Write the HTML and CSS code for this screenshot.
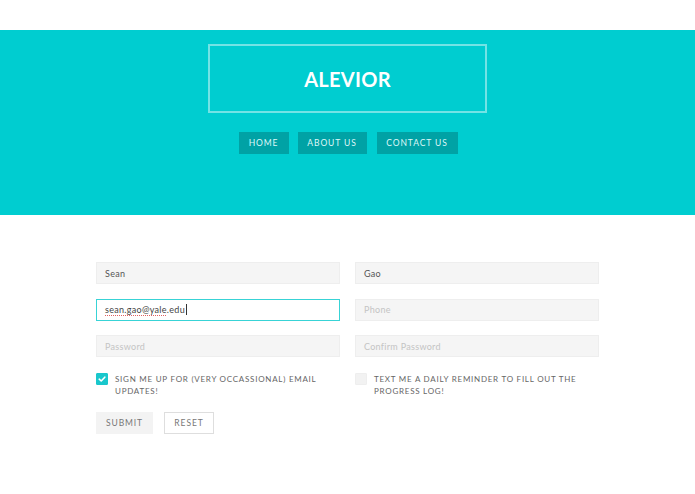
FILE: index.html
```html
<!DOCTYPE html>
<html>
<head>
<meta charset="utf-8">
<link rel="stylesheet" href="styles.css">
</head>
<body>
<header class="hero">
  <div class="logo">ALEVIOR</div>
  <nav class="nav">
    <a class="nav-btn home">HOME</a>
    <a class="nav-btn about">ABOUT US</a>
    <a class="nav-btn contact">CONTACT US</a>
  </nav>
</header>
<main class="form">
  <div class="grid">
    <div class="field">Sean</div>
    <div class="field">Gao</div>
    <div class="field focus"><span class="typo">sean.gao@yale</span>.edu<span class="caret"></span></div>
    <div class="field ph">Phone</div>
    <div class="field ph">Password</div>
    <div class="field ph">Confirm Password</div>
    <label class="check">
      <span class="box on"><svg viewBox="0 0 12 12" width="12" height="12"><path d="M3.2 6.2 L5.2 8 L8.8 4.2" fill="none" stroke="#fff" stroke-width="1.6" stroke-linecap="round" stroke-linejoin="round"/></svg></span>
      <span class="lbl">SIGN ME UP FOR (VERY OCCASSIONAL) EMAIL UPDATES!</span>
    </label>
    <label class="check">
      <span class="box"></span>
      <span class="lbl">TEXT ME A DAILY REMINDER TO FILL OUT THE PROGRESS LOG!</span>
    </label>
  </div>
  <div class="actions">
    <button class="btn submit">SUBMIT</button>
    <button class="btn reset">RESET</button>
  </div>
</main>
</body>
</html>
```
FILE: styles.css
```css
* { box-sizing: border-box; }
body {
  margin: 0;
  font-family: Lato, "Open Sans", sans-serif;
  background: #fff;
}
.hero {
  margin-top: 30px;
  height: 185px;
  background: #00cdd0;
  display: flex;
  flex-direction: column;
  align-items: center;
  padding-top: 14px;
}
.logo {
  width: 279px;
  height: 69px;
  border: 2px solid rgba(255,255,255,0.45);
  display: flex;
  align-items: center;
  justify-content: center;
  color: #fff;
  font-weight: 700;
  font-size: 20px;
  letter-spacing: 0.3px;
}
.nav {
  display: flex;
  margin-top: 19px;
  margin-left: 1px;
}
.nav-btn {
  height: 22px;
  background: #00a2a5;
  color: #dff8f8;
  font-size: 8.5px;
  letter-spacing: 0.9px;
  display: flex;
  align-items: center;
  justify-content: center;
}
.home { width: 50px; }
.about { width: 69px; margin-left: 9px; }
.contact { width: 81px; margin-left: 10px; }
.form {
  width: 503px;
  margin: 47px auto 0;
}
.grid {
  display: grid;
  grid-template-columns: 244px 244px;
  column-gap: 15px;
  row-gap: 14.5px;
}
.field {
  height: 22px;
  background: #f5f5f5;
  border: 1px solid #eeeeee;
  font-size: 9px;
  color: #555;
  display: flex;
  align-items: center;
  padding-left: 8px;
  letter-spacing: 0.3px;
}
.field.ph { color: #c4c4c4; }
.field.focus {
  background: #fff;
  border: 1.5px solid #38d3d6;
  color: #444;
}
.typo {
  text-decoration: underline dotted #e06060;
  text-decoration-thickness: 1px;
  text-underline-offset: 2px;
}
.caret {
  display: inline-block;
  width: 1px;
  height: 11px;
  background: #333;
  margin-left: 1px;
}
.check {
  display: flex;
  align-items: flex-start;
  gap: 7px;
  margin-top: 1px;
}
.box {
  flex: none;
  width: 12px;
  height: 12px;
  background: #f2f2f2;
  border: 1px solid #eee;
  border-radius: 1px;
  display: flex;
}
.box.on { background: #19c7cc; border-color: #19c7cc; }
.box svg { margin: -1px; }
.lbl {
  font-size: 8px;
  line-height: 12px;
  letter-spacing: 0.75px;
  color: #666;
  padding-right: 16px;
}
.actions {
  display: flex;
  gap: 11px;
  margin-top: 15px;
}
.btn {
  height: 22px;
  font-family: inherit;
  font-size: 8.5px;
  letter-spacing: 0.9px;
  color: #777;
  padding: 0;
}
.submit { background: #f3f3f3; border: 1px solid #f3f3f3; width: 57px; }
.reset { background: #fff; border: 1px solid #dedede; width: 50px; }
```
